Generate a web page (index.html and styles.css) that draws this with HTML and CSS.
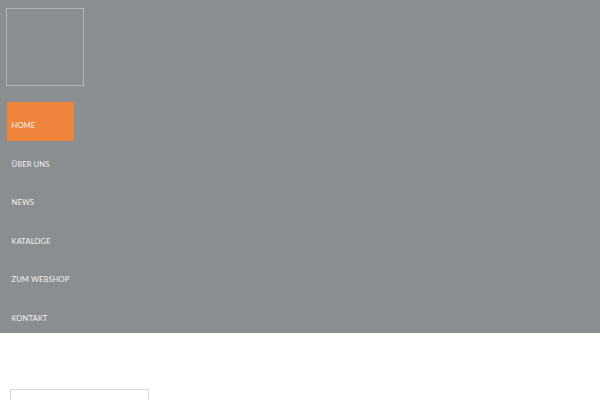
FILE: index.html
```html
<!DOCTYPE html>
<html lang="de">
<head>
<meta charset="utf-8">
<link rel="stylesheet" href="styles.css">
</head>
<body>
<header class="header">
  <div class="logo"></div>
  <nav class="nav">
    <a class="item active">HOME</a>
    <a class="item">ÜBER UNS</a>
    <a class="item">NEWS</a>
    <a class="item">KATALOGE</a>
    <a class="item">ZUM WEBSHOP</a>
    <a class="item">KONTAKT</a>
  </nav>
</header>
<main class="main">
  <div class="search"></div>
</main>
</body>
</html>
```
FILE: styles.css
```css
html, body { margin: 0; padding: 0; background: #fff; }
body { font-family: Lato, "Liberation Sans", Arial, sans-serif; }
.header {
  background: #8a8e91;
  height: 333px;
  padding: 8px 0 0 6px;
  box-sizing: border-box;
  display: flex;
  flex-direction: column;
}
.logo {
  width: 78px;
  height: 78px;
  box-sizing: border-box;
  border: 1px solid #b3b6b8;
}
.nav {
  margin-top: 16px;
  display: flex;
  flex-direction: column;
}
.item {
  display: block;
  height: 38.5px;
  width: 67px;
  margin-left: 1px;
  padding: 18px 0 0 4.5px;
  box-sizing: border-box;
  color: #f2f2f2;
  font-size: 7.6px;
  line-height: 10px;
  letter-spacing: 0.1px;
  white-space: nowrap;
}
.item.active { background: #ef843c; }
.main { padding: 56px 0 0 10px; }
.search {
  width: 139px;
  height: 14px;
  box-sizing: border-box;
  border: 1px solid #d8d8d8;
}
```
